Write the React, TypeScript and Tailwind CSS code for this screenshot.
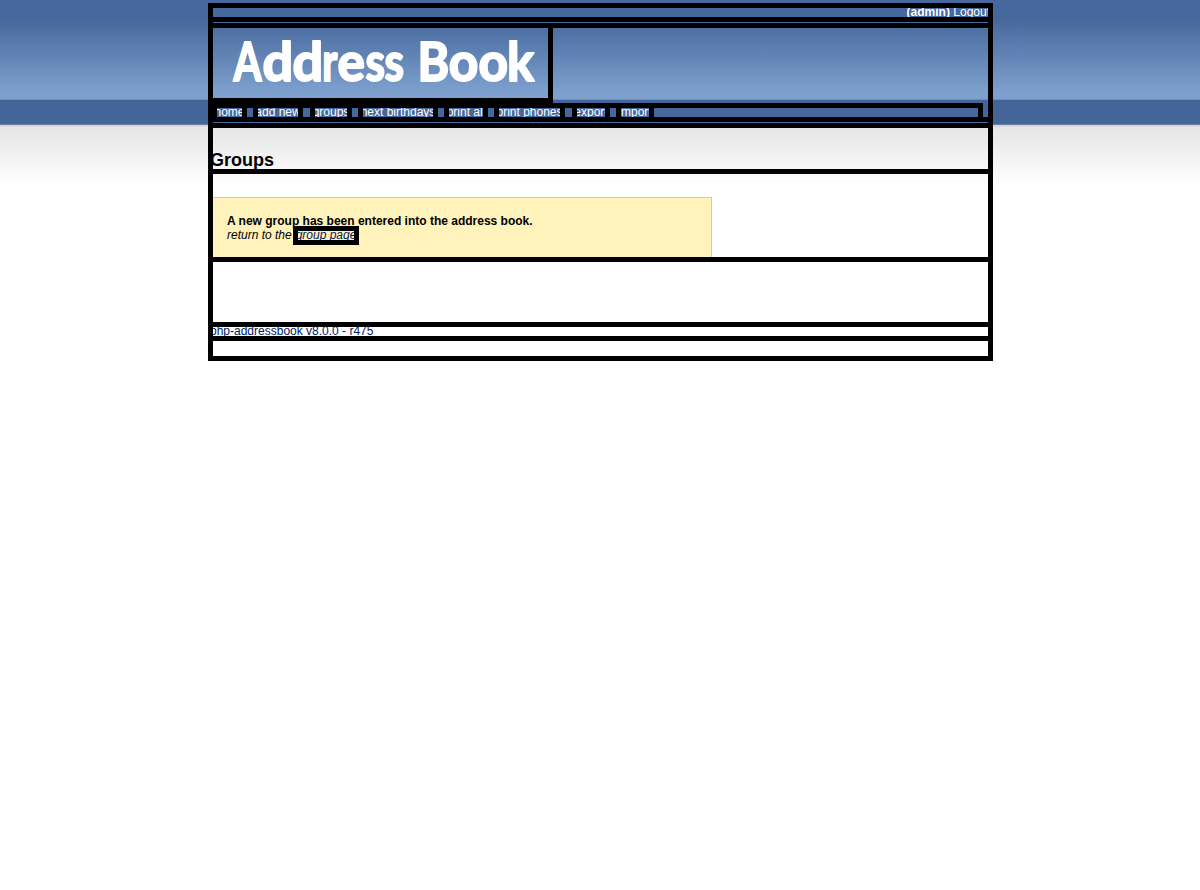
import React from "react";

type NavItem = { label: string; cell: string; gap: string };

const items: NavItem[] = [
  { label: "home", cell: "w-[25px]", gap: "w-[16px]" },
  { label: "add new", cell: "w-[40px]", gap: "w-[17px]" },
  { label: "groups", cell: "w-[32px]", gap: "w-[16px]" },
  { label: "next birthdays", cell: "w-[70px]", gap: "w-[16px]" },
  { label: "print all", cell: "w-[34px]", gap: "w-[16px]" },
  { label: "print phones", cell: "w-[61px]", gap: "w-[17px]" },
  { label: "export", cell: "w-[28px]", gap: "w-[16px]" },
  { label: "import", cell: "w-[28px]", gap: "w-[5px]" },
];

// Each letter of the wordmark: character, left edge, horizontal scale.
const letters: [string, number, number][] = [
  ["A", 20.5, 0.76],
  ["d", 49.5, 1.02],
  ["d", 79.5, 1.02],
  ["r", 109.3, 0.76],
  ["e", 124.5, 0.97],
  ["s", 152.5, 0.84],
  ["s", 171.5, 0.84],
  ["B", 204.5, 0.91],
  ["o", 235.7, 0.97],
  ["o", 265.5, 0.97],
  ["k", 294, 0.96],
];

function Logo() {
  return (
    <svg width="335" height="70" viewBox="0 0 335 70" role="img" aria-label="Address Book">
      {letters.map(([char, x, scale], i) => (
        <text
          key={i}
          transform={`translate(${x} 52.5) scale(${scale} 1)`}
          fill="#fff"
          stroke="#fff"
          strokeWidth="2"
          strokeLinejoin="round"
          className="font-['Lato'] text-[53px] font-bold"
        >
          {char}
        </text>
      ))}
    </svg>
  );
}

function Nav() {
  return (
    <nav className="flex h-[14px] border-b-[5px] border-black">
      <div className="w-[4px] bg-black" />
      {items.map((item, i) => (
        <React.Fragment key={item.label}>
          <a className={`flex h-[9px] shrink-0 justify-center overflow-hidden bg-[#46679b] leading-[14px] text-white ${item.cell}`}>
            <span className="-mt-[3px] shrink-0 whitespace-nowrap">{item.label}</span>
          </a>
          <div className={`h-[9px] shrink-0 border-l-[5px] border-black bg-[#46679b] ${i < items.length - 1 ? "border-r-[5px]" : ""} ${item.gap}`} />
        </React.Fragment>
      ))}
      <div className="h-[9px] flex-1 border-r-[5px] border-black bg-[#46679b]" />
      <div className="w-[5px] bg-[#46679b]" />
    </nav>
  );
}

export default function App() {
  return (
    <div className="min-h-[890px] bg-white bg-[linear-gradient(to_bottom,#47689c_0px,#47689c_20px,#7da0ce_92px,#7da0ce_99px,#6c8fc1_99px,#6c8fc1_100px,#446599_100px,#446599_124px,#7080a0_124px,#7080a0_125px,#cfd3df_125px,#cfd3df_126px,#e5e5e5_127px,#ffffff_186px)] pt-[3px] font-['Liberation_Sans',Arial,sans-serif] text-[12px] text-black">
      <div className="ml-[208px] h-[358px] w-[785px] border-[5px] border-black">
        <div className="flex h-[14px] justify-end overflow-hidden border-b-[5px] border-black bg-[#46689c] leading-[14px] text-white">
          <span className="-mt-[3px] -mr-[2px] whitespace-nowrap"><b>(admin)</b> Logout</span>
        </div>
        <div className="h-[6px] border-b-[5px] border-black bg-[#46689c]" />
        <header className="flex h-[75px]">
          <div className="h-[75px] w-[340px] border-r-[5px] border-b-[5px] border-black">
            <Logo />
          </div>
        </header>
        <div className="flex h-[5px]">
          <div className="w-[770px] bg-black" />
        </div>
        <Nav />
        <div className="h-[6px] border-b-[5px] border-black bg-[#46689c]" />
        <div className="h-[46px] border-b-[5px] border-black pt-[22px]">
          <h1 className="-ml-[3px] text-[18px] leading-[21px] font-bold">Groups</h1>
        </div>
        <section className="h-[88px] border-b-[5px] border-black pt-[23px]">
          <div className="h-[60px] w-[499px] border-t border-r border-[#c9c9cc] bg-[#fff2bb] pt-[16px] pl-[14px] leading-[14px]">
            <p className="font-bold">A new group has been entered into the address book.</p>
            <p className="flex h-[14px] italic">
              <span className="w-[66px] shrink-0 whitespace-nowrap">return to the</span>
              <a className="-mt-[2px] flex h-[19px] w-[66px] shrink-0 justify-center overflow-hidden border-[5px] border-black bg-[#fff2bb] text-[#002166]">
                <span className="-mt-[3px] shrink-0 whitespace-nowrap">group page</span>
              </a>
            </p>
          </div>
        </section>
        <div className="h-[65px] border-b-[5px] border-black" />
        <footer className="h-[14px] overflow-hidden border-b-[5px] border-black leading-[14px] text-[#002166]">
          <div className="-mt-[3px] -ml-[3px]">php-addressbook v8.0.0 - r475</div>
        </footer>
      </div>
    </div>
  );
}
